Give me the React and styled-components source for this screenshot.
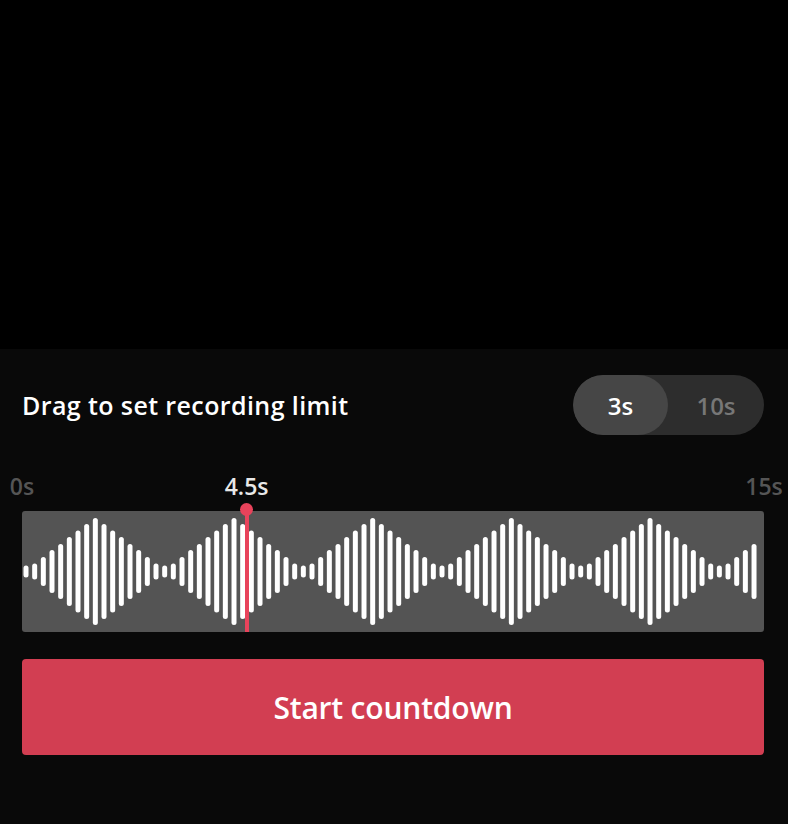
import styled, { createGlobalStyle } from 'styled-components';

const GlobalStyle = createGlobalStyle`
  html, body {
    margin: 0;
    padding: 0;
    background: #000;
  }
  body {
    font-family: "Open Sans", "Liberation Sans", sans-serif;
    -webkit-font-smoothing: antialiased;
  }
`;

const Screen = styled.div`
  width: 788px;
  height: 824px;
  display: flex;
  flex-direction: column;
  background: #000;
  overflow: hidden;
`;

const Preview = styled.div`
  height: 349px;
  flex-shrink: 0;
  background: #000;
`;

const Panel = styled.section`
  flex-grow: 1;
  background: #090909;
  padding: 26px 24px 0 22px;
  box-sizing: border-box;
`;

const Header = styled.div`
  display: flex;
  align-items: center;
  justify-content: space-between;
  height: 60px;
`;

const Title = styled.h2`
  margin: 0;
  font-size: 25px;
  font-weight: 600;
  color: #fff;
  letter-spacing: 0.4px;
`;

const Toggle = styled.div`
  display: flex;
  width: 191px;
  height: 60px;
  border-radius: 30px;
  background: #2d2d2d;
  overflow: hidden;
`;

const ToggleOption = styled.button`
  flex: 0 0 ${({ $active }) => ($active ? '95px' : '96px')};
  border: none;
  border-radius: 30px;
  padding: 0;
  font-family: inherit;
  font-size: 24px;
  font-weight: 600;
  color: ${({ $active }) => ($active ? '#fff' : '#777')};
  background: ${({ $active }) => ($active ? '#464646' : 'transparent')};
  cursor: pointer;
`;

const LabelRow = styled.div`
  position: relative;
  height: 76px;
`;

const TimeLabel = styled.span`
  position: absolute;
  top: 51px;
  transform: translate(-50%, -50%);
  font-size: 23px;
  font-weight: 600;
  color: ${({ $current }) => ($current ? '#e8e8e8' : '#555')};
  white-space: nowrap;
`;

const Track = styled.div`
  position: relative;
  height: 121px;
  border-radius: 3px;
  background: #545454;
`;

const Wave = styled.svg`
  display: block;
`;

const Playhead = styled.div`
  position: absolute;
  top: 0;
  bottom: 0;
  width: 4px;
  background: #e8435b;

  &::before {
    content: '';
    position: absolute;
    top: -8px;
    left: 50%;
    width: 13px;
    height: 13px;
    margin-left: -6.5px;
    border-radius: 50%;
    background: #e8435b;
  }
`;

const StartButton = styled.button`
  display: block;
  width: 100%;
  height: 96px;
  margin-top: 27px;
  border: none;
  border-radius: 4px;
  background: #d23e52;
  color: #fff;
  font-family: inherit;
  font-size: 30px;
  font-weight: 600;
  letter-spacing: -0.2px;
  cursor: pointer;
`;

const TRACK_WIDTH = 742;
const TRACK_HEIGHT = 121;
const MAX_SECONDS = 15;
const CURRENT = 4.5;

const BAR_COUNT = 85;
const PITCH = 8.667;
const BAR_WIDTH = 5;
const heights = [107, 95, 82, 69, 55, 43, 29, 16, 12];

const bars = Array.from({ length: BAR_COUNT }, (_, i) => {
  const d = Math.abs(((i - 8) % 16 + 16) % 16);
  const dist = d > 8 ? 16 - d : d;
  return heights[dist];
});

function Waveform() {
  return (
    <Wave width={TRACK_WIDTH} height={TRACK_HEIGHT}>
      {bars.map((h, i) => (
        <rect
          key={i}
          x={1.5 + i * PITCH}
          y={TRACK_HEIGHT / 2 - h / 2}
          width={BAR_WIDTH}
          height={h}
          rx={2.5}
          fill="#fff"
        />
      ))}
    </Wave>
  );
}

function App() {
  const pct = (s) => `${(s / MAX_SECONDS) * 100}%`;

  return (
    <>
      <GlobalStyle />
      <Screen>
        <Preview />
        <Panel>
          <Header>
            <Title>Drag to set recording limit</Title>
            <Toggle>
              <ToggleOption $active>3s</ToggleOption>
              <ToggleOption>10s</ToggleOption>
            </Toggle>
          </Header>
          <LabelRow>
            <TimeLabel style={{ left: pct(0) }}>0s</TimeLabel>
            <TimeLabel $current style={{ left: `calc(${pct(CURRENT)} + 2px)` }}>
              {CURRENT}s
            </TimeLabel>
            <TimeLabel style={{ left: pct(MAX_SECONDS) }}>{MAX_SECONDS}s</TimeLabel>
          </LabelRow>
          <Track>
            <Waveform />
            <Playhead style={{ left: pct(CURRENT) }} />
          </Track>
          <StartButton>Start countdown</StartButton>
        </Panel>
      </Screen>
    </>
  );
}

export default App;
